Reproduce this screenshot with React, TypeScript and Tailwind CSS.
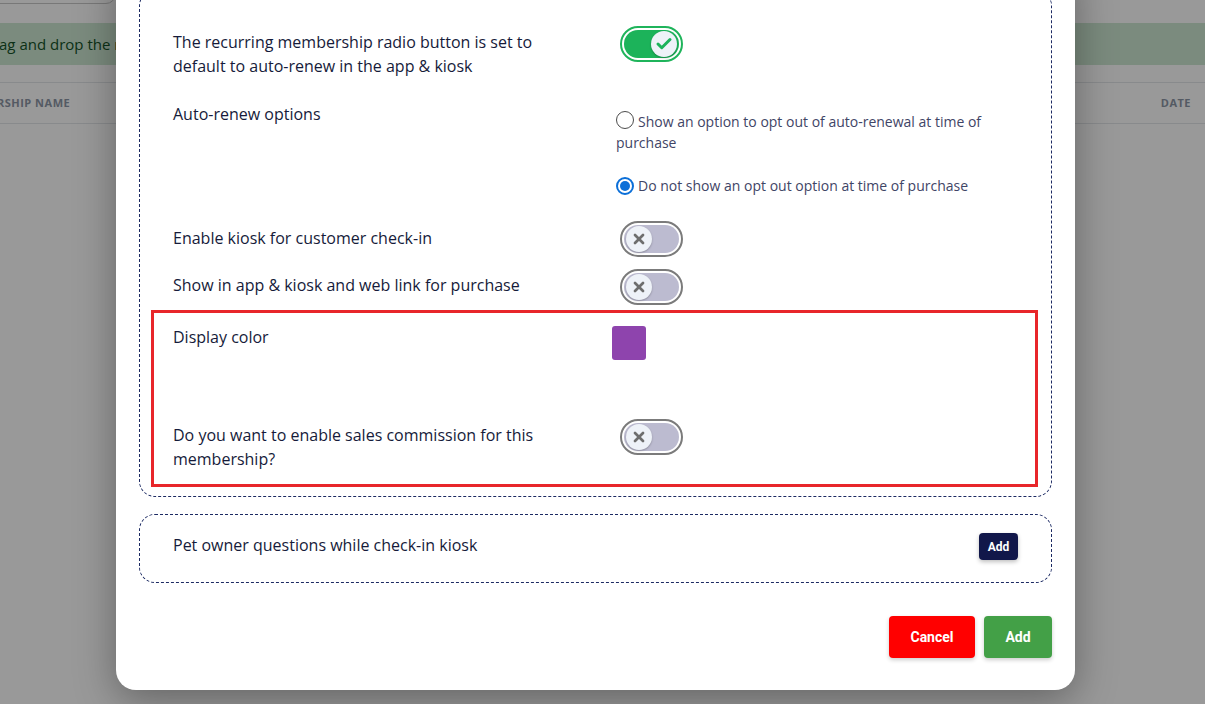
import React from 'react';
import { Check, X } from 'lucide-react';

const LABEL = 'text-[16px] leading-[24px] font-medium text-[#161b3a]';

function Toggle({ on }: { on?: boolean }) {
  return (
    <div
      className={`w-[63px] h-[36px] rounded-full border-2 p-[2px] bg-white ${
        on ? 'border-[#1fb45b]' : 'border-[#7b7b7b]'
      }`}
    >
      <div
        className={`w-full h-full rounded-full flex items-center px-[2px] ${
          on ? 'bg-[#1cb35a] justify-end' : 'bg-[#bcbbd0] justify-start'
        }`}
      >
        <div className="w-[26px] h-[26px] rounded-full bg-[#eef2f8] shadow-[0_1px_2px_rgba(0,0,0,0.25)] flex items-center justify-center">
          {on ? (
            <Check size={18} strokeWidth={4} className="text-[#1cb35a]" />
          ) : (
            <X size={16} strokeWidth={4} className="text-[#6e6e6e]" />
          )}
        </div>
      </div>
    </div>
  );
}

function Radio({ checked }: { checked?: boolean }) {
  return (
    <span
      className={`inline-flex shrink-0 w-[18px] h-[18px] rounded-full border items-center justify-center bg-white align-middle ${
        checked ? 'border-[#0b6fd8] border-2' : 'border-[#4b4b4b]'
      }`}
    >
      {checked && <span className="w-[10px] h-[10px] rounded-full bg-[#0b6fd8]" />}
    </span>
  );
}

export default function App() {
  return (
    <div className="relative w-full h-[704px] overflow-hidden bg-white font-['Open_Sans',sans-serif]">
      {/* page behind the modal */}
      <div className="h-[23px] relative">
        <div className="absolute left-[-20px] top-[-20px] w-[136px] h-[24px] rounded-[10px] border border-[#c9c9c9]" />
      </div>
      <div className="h-[42px] bg-[#cde8d3] flex items-center overflow-hidden">
        <span className="ml-[-18px] whitespace-nowrap text-[15px] text-[#145227]">Drag and drop the memberships to change the order</span>
      </div>
      <div className="mt-[17px] h-[42px] border-y border-[#e3e6ea] flex items-center justify-between pr-[14px] overflow-hidden">
        <span className="ml-[-46px] whitespace-nowrap text-[11px] font-bold tracking-[0.5px] text-[#8d96a6]">MEMBERSHIP NAME</span>
        <span className="text-[11px] font-bold tracking-[0.5px] text-[#8d96a6]">DATE</span>
      </div>

      {/* overlay */}
      <div className="absolute inset-0 bg-black/40" />

      {/* modal */}
      <div className="absolute left-[116px] top-[-40px] w-[959px] bg-white rounded-[20px] shadow-[0_10px_40px_rgba(0,0,0,0.35)] px-[23px] pt-[30px] pb-[32px]">
        <div className="border border-dashed border-[#1c2a63] rounded-[16px] pl-[11px] pr-[13px] pt-[35px] pb-[9px]">
          {/* recurring */}
          <div className="flex pl-[22px]">
            <div className={`w-[439px] pr-[60px] mt-[4px] ${LABEL}`}>
              The recurring membership radio button is set to default to auto-renew in the app &amp; kiosk
            </div>
            <div className="pl-[8px]">
              <Toggle on />
            </div>
          </div>

          {/* auto-renew */}
          <div className="flex pl-[22px] mt-[24px]">
            <div className={`w-[439px] ${LABEL}`}>Auto-renew options</div>
            <div className="pl-[4px] mt-[9px] text-[14px] leading-[21px] text-[#3f4566] w-[380px]">
              <div className="flex items-start gap-[4px]">
                <Radio />
                <span className="ml-[-22px] indent-[22px]">Show an option to opt out of auto-renewal at time of purchase</span>
              </div>
              <div className="flex items-center gap-[4px] mt-[22px]">
                <Radio checked />
                <span>Do not show an opt out option at time of purchase</span>
              </div>
            </div>
          </div>

          {/* kiosk */}
          <div className="flex pl-[22px] mt-[25px]">
            <div className={`w-[439px] mt-[5px] ${LABEL}`}>Enable kiosk for customer check-in</div>
            <div className="pl-[8px]">
              <Toggle />
            </div>
          </div>

          <div className="flex pl-[22px] mt-[12px]">
            <div className={`w-[439px] mt-[4px] ${LABEL}`}>Show in app &amp; kiosk and web link for purchase</div>
            <div className="pl-[8px]">
              <Toggle />
            </div>
          </div>

          {/* highlighted */}
          <div className="mt-[5px] border-[3px] border-[#e8262a] pl-[19px] pt-[12px] pb-[13px]">
            <div className="flex">
              <div className={`w-[439px] ${LABEL}`}>Display color</div>
              <div className="mt-[1px] w-[34px] h-[34px] rounded-[3px] bg-[#8e44ad]" />
            </div>
            <div className="flex mt-[59px]">
              <div className={`w-[439px] pr-[60px] mt-[4px] ${LABEL}`}>
                Do you want to enable sales commission for this membership?
              </div>
              <div className="pl-[8px]">
                <Toggle />
              </div>
            </div>
          </div>
        </div>

        <div className="mt-[17px] h-[69px] border border-dashed border-[#1c2a63] rounded-[16px] px-[33px] flex items-center justify-between">
          <span className={`${LABEL} mt-[-8px]`}>Pet owner questions while check-in kiosk</span>
          <button className="mt-[-4px] w-[39px] h-[27px] rounded-[4px] bg-[#11174a] text-white text-[12px] font-bold font-['Roboto',sans-serif] shadow-[0_2px_4px_rgba(0,0,0,0.25)]">
            Add
          </button>
        </div>

        <div className="mt-[33px] flex justify-end gap-[9px]">
          <button className="w-[86px] h-[42px] rounded-[4px] bg-[#ff0000] text-white text-[14px] font-bold font-['Roboto',sans-serif] shadow-[0_2px_4px_rgba(0,0,0,0.2)]">
            Cancel
          </button>
          <button className="w-[68px] h-[42px] rounded-[4px] bg-[#43a047] text-white text-[14px] font-bold font-['Roboto',sans-serif] shadow-[0_2px_4px_rgba(0,0,0,0.2)]">
            Add
          </button>
        </div>
      </div>
    </div>
  );
}
